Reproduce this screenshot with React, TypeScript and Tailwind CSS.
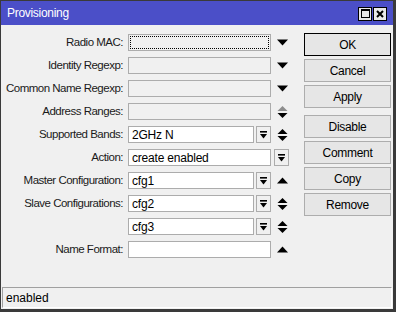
import React from "react";

type Side = "down" | "updown" | "updownDim" | "up" | "none";

type Row = {
  label: string;
  value?: string;
  disabled?: boolean;
  focus?: boolean;
  combo?: boolean;
  wide?: boolean;
  side: Side;
};

const rows: Row[] = [
  { label: "Radio MAC:", disabled: true, focus: true, side: "down" },
  { label: "Identity Regexp:", disabled: true, side: "down" },
  { label: "Common Name Regexp:", disabled: true, side: "down" },
  { label: "Address Ranges:", disabled: true, side: "updownDim" },
  { label: "Supported Bands:", value: "2GHz N", combo: true, side: "updown" },
  { label: "Action:", value: "create enabled", wide: true, side: "none" },
  { label: "Master Configuration:", value: "cfg1", combo: true, side: "up" },
  { label: "Slave Configurations:", value: "cfg2", combo: true, side: "updown" },
  { label: "", value: "cfg3", combo: true, side: "updown" },
  { label: "Name Format:", side: "up" },
];

const buttons = [
  ["OK", "Cancel", "Apply"],
  ["Disable", "Comment", "Copy", "Remove"],
];

function DropIcon() {
  return (
    <svg width="9" height="8" viewBox="0 0 9 8">
      <rect x="1" y="0" width="7" height="1.6" fill="#000" />
      <path d="M1 3 H8 L4.5 7.5 Z" fill="#000" />
    </svg>
  );
}

function SideIcon({ kind }: { kind: Side }) {
  if (kind === "none") return null;
  if (kind === "down")
    return (
      <svg width="11" height="7" viewBox="0 0 11 7">
        <path d="M0 0.5 H11 L5.5 6.5 Z" fill="#000" />
      </svg>
    );
  if (kind === "up")
    return (
      <svg width="11" height="7" viewBox="0 0 11 7">
        <path d="M0 6.5 H11 L5.5 0.5 Z" fill="#000" />
      </svg>
    );
  return (
    <svg width="11" height="12" viewBox="0 0 11 12">
      <path d="M0.5 5 H10.5 L5.5 0 Z" fill={kind === "updownDim" ? "#8d8d8d" : "#000"} />
      <path d="M0.5 7 H10.5 L5.5 12 Z" fill="#000" />
    </svg>
  );
}

function Field({ row }: { row: Row }) {
  const bg = row.disabled ? "bg-[#f0f0f0]" : "bg-white";
  return (
    <div
      className={`relative h-[17px] border border-[#acacac] ${bg} flex items-center px-[3px] text-black text-[12px] tracking-[-0.2px] ${
        row.combo ? "w-[126px]" : "w-[143px]"
      }`}
    >
      {row.focus && (
        <div className="absolute inset-[1px] border border-dotted border-black" />
      )}
      {row.value}
    </div>
  );
}

function DropButton() {
  return (
    <div className="h-[17px] w-[15px] border border-[#acacac] bg-[#f0f0f0] flex items-center justify-center">
      <DropIcon />
    </div>
  );
}

export default function App() {
  return (
    <div
      className="w-[396px] h-[312px] flex flex-col bg-[#f0f0f0] border-t border-l border-r-[3px] border-b-[3px] border-[#3a3a3a] text-[12px] text-[#1a1a1a] overflow-hidden"
      style={{ fontFamily: '"Liberation Sans", Arial, sans-serif' }}
    >
      {/* title bar */}
      <div className="h-[24px] shrink-0 bg-[#4b4fc8] flex items-center pl-[6px] pr-[6px]">
        <span className="text-white text-[12px] tracking-[-0.3px] flex-1">Provisioning</span>
        <div className="flex gap-[1px] mt-[1px]">
          <div className="w-[14px] h-[14px] border border-black bg-[#e9e9e9] flex items-center justify-center">
            <div className="w-[9px] h-[9px] border border-black border-t-2" />
          </div>
          <div className="w-[14px] h-[14px] border border-black bg-[#e9e9e9] flex items-center justify-center">
            <svg width="8" height="8" viewBox="0 0 8 8">
              <path d="M1 1 L7 7 M7 1 L1 7" stroke="#000" strokeWidth="2" />
            </svg>
          </div>
        </div>
      </div>

      {/* body */}
      <div className="flex-1 flex">
        <div className="w-[303px] pt-[9px] flex flex-col gap-[6px]">
          {rows.map((row, i) => (
            <div key={i} className="flex items-center h-[17px]">
              <div className="w-[123px] text-right pr-[1px] whitespace-nowrap text-[11.5px] tracking-[-0.5px]">
                {row.label}
              </div>
              <div className="ml-[4px] flex gap-[2px]">
                <Field row={row} />
                {row.combo && <DropButton />}
              </div>
              {row.wide ? (
                <div className="ml-[3px]">
                  <DropButton />
                </div>
              ) : (
                <div className="ml-[6px] w-[11px] flex justify-center">
                  <SideIcon kind={row.side} />
                </div>
              )}
            </div>
          ))}
        </div>

        <div className="w-[87px] pt-[8px] flex flex-col gap-[7px]">
          {buttons.map((group, g) => (
            <div key={g} className="flex flex-col gap-[3px]">
              {group.map((b) => (
                <div
                  key={b}
                  className={`h-[23px] flex items-center justify-center bg-[#e6e6e6] border text-[12px] tracking-[-0.3px] text-black ${
                    b === "OK" ? "border-black" : "border-[#adadad]"
                  }`}
                >
                  {b}
                </div>
              ))}
            </div>
          ))}
        </div>
      </div>

      {/* status bar */}
      <div className="h-[21px] mx-[1px] mb-[1px] border border-t-[#a0a0a0] border-l-[#a0a0a0] border-r-white border-b-white flex items-center px-[3px] text-[12px] text-black">
        enabled
      </div>
    </div>
  );
}
